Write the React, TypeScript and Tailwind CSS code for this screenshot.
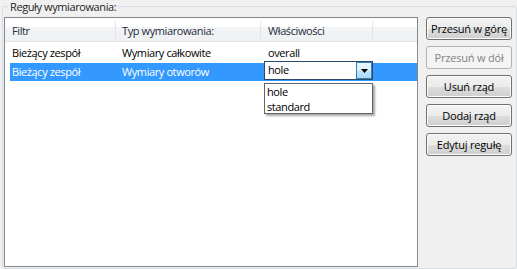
import React from "react";

const font = { fontFamily: '"Open Sans", "Noto Sans", sans-serif' };

function Btn({ label, disabled }: { label: string; disabled?: boolean }) {
  return (
    <button
      className={
        disabled
          ? "h-[23px] w-[86px] whitespace-nowrap rounded-[3px] border border-[#adb2b5] bg-[#f4f4f4] text-[11px] leading-none tracking-[-0.2px] text-[#838383]"
          : "h-[23px] w-[86px] whitespace-nowrap rounded-[3px] border border-[#707070] bg-[linear-gradient(to_bottom,#f2f2f2_0%,#ebebeb_50%,#dddddd_51%,#cfcfcf_100%)] text-[11px] leading-none tracking-[-0.2px] text-black shadow-[inset_0_0_0_1px_#fcfcfc]"
      }
    >
      {label}
    </button>
  );
}

export default function App() {
  return (
    <div className="h-[269px] w-[517px] overflow-hidden bg-[#f0f0f0] pl-[2px] pt-[6px] text-[11px] tracking-[-0.4px] text-black" style={font}>
      <div className="relative flex h-[263px] w-[515px] rounded-[3px] border border-[#d5dfe5] pl-[1px] pt-[10px]">
        <span className="absolute -top-[8px] left-[5px] whitespace-nowrap bg-[#f0f0f0] px-[2px] leading-[16px] text-[#1e1e1e]">
          Reguły wymiarowania:
        </span>
        <div className="relative h-[250px] w-[414px] border border-[#828790] bg-white">
          <div className="flex h-[24px] border-b border-[#e3e5e8] bg-[linear-gradient(to_bottom,#ffffff_0%,#ffffff_40%,#f3f4f6_41%,#eef0f2_100%)] pt-[3px] text-[#1e2a3a]">
            <div className="flex w-[111px] items-center border-r border-[#e3e5e8] pl-[7px]">Filtr</div>
            <div className="flex w-[145px] items-center border-r border-[#e3e5e8] pl-[6px]">Typ wymiarowania:</div>
            <div className="flex w-[112px] items-center border-r border-[#e3e5e8] pl-[7px]">Właściwości</div>
            <div className="flex-1" />
          </div>
          <div className="pt-[2px]">
            <div className="ml-[5px] flex h-[19px] items-center">
              <div className="w-[106px] pl-[2px]">Bieżący zespół</div>
              <div className="w-[145px] pl-[6px]">Wymiary całkowite</div>
              <div className="w-[112px] pl-[7px]">overall</div>
            </div>
            <div className="relative ml-[5px] flex h-[18px] items-center bg-[#3399ff] text-white">
              <div className="w-[106px] pl-[2px]">Bieżący zespół</div>
              <div className="w-[145px] pl-[6px]">Wymiary otworów</div>
              <div className="w-[112px] pl-[7px]" />
              <div className="absolute -top-[2px] left-[254px] flex h-[19px] w-[109px] items-center border border-[#2e4a6a] bg-white text-black">
                <span className="flex-1 pl-[3px]">hole</span>
                <span className="flex h-[17px] w-[16px] items-center justify-center border border-[#3c7fb1] bg-[linear-gradient(to_bottom,#eaf6fd_0%,#d9f0fc_50%,#bee6fd_51%,#a7d9f5_100%)]">
                  <svg width="7" height="4" viewBox="0 0 7 4">
                    <path d="M0 0H7L3.5 4Z" fill="#000" />
                  </svg>
                </span>
              </div>
              <div className="absolute left-[254px] top-[20px] z-10 flex h-[31px] w-[109px] flex-col border border-[#646464] bg-white text-black shadow-[2px_2px_2px_rgba(0,0,0,0.35)]">
                <div className="flex h-[15px] items-center pl-[2px] leading-[15px]">hole</div>
                <div className="flex h-[15px] items-center pl-[2px] leading-[15px]">standard</div>
              </div>
            </div>
          </div>
        </div>
        <div className="ml-[8px] flex flex-col gap-[6px]">
          <Btn label="Przesuń w górę" />
          <Btn label="Przesuń w dół" disabled />
          <Btn label="Usuń rząd" />
          <Btn label="Dodaj rząd" />
          <Btn label="Edytuj regułę" />
        </div>
      </div>
    </div>
  );
}
